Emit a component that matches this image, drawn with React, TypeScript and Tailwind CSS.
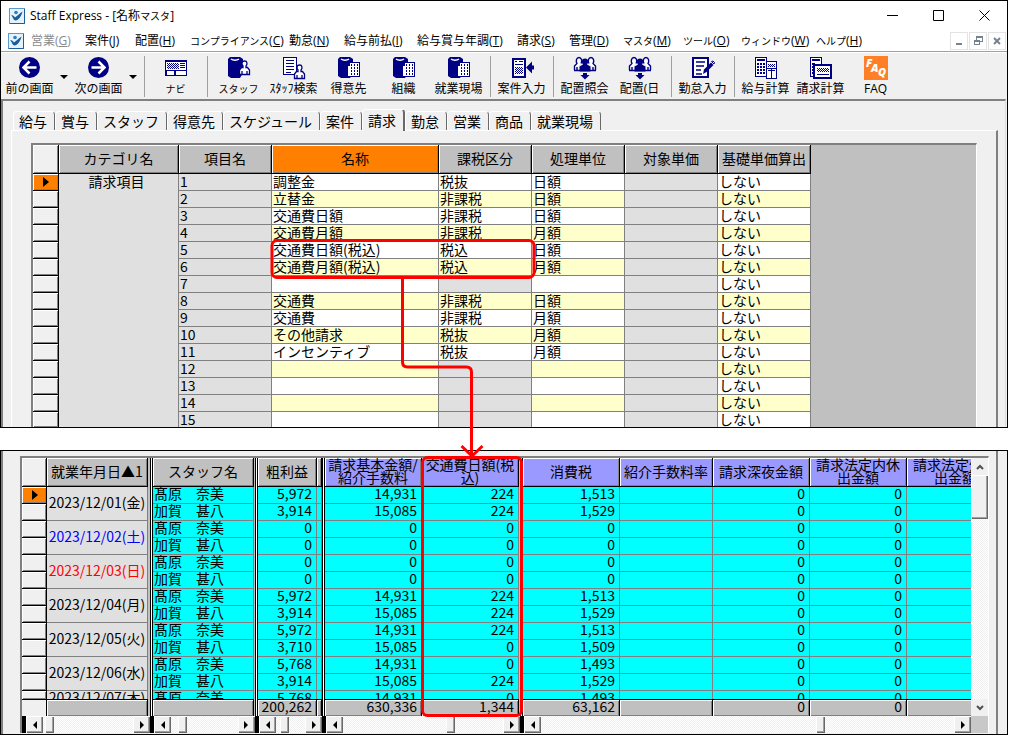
import { Fragment, useState } from "react";
import type { ReactNode } from "react";
import clsx from "clsx";

const NAVY = "#000084";

const menus = [
  { text: "営業", mnemonic: "G", width: "w-[54px]", disabled: true },
  { text: "案件", mnemonic: "J", width: "w-[50px]" },
  { text: "配置", mnemonic: "H", width: "w-[55px]" },
  { text: "コンプライアンス", mnemonic: "C", width: "w-[99px]", kana: true },
  { text: "勤怠", mnemonic: "N", width: "w-[55px]" },
  { text: "給与前払", mnemonic: "I", width: "w-[73px]" },
  { text: "給与賞与年調", mnemonic: "T", width: "w-[100px]" },
  { text: "請求", mnemonic: "S", width: "w-[52px]" },
  { text: "管理", mnemonic: "D", width: "w-[54px]" },
  { text: "マスタ", mnemonic: "M", width: "w-[60px]", kana: true },
  { text: "ツール", mnemonic: "O", width: "w-[58px]", kana: true },
  { text: "ウィンドウ", mnemonic: "W", width: "w-[75px]", kana: true },
  { text: "ヘルプ", mnemonic: "H", width: "w-[50px]", kana: true }
];

const tabs = ["給与", "賞与", "スタッフ", "得意先", "スケジュール", "案件", "請求", "勤怠", "営業", "商品", "就業現場"];

const masterRows = [
  { name: "調整金", tax: "税抜", unit: "日額" },
  { name: "立替金", tax: "非課税", unit: "日額" },
  { name: "交通費日額", tax: "非課税", unit: "日額" },
  { name: "交通費月額", tax: "非課税", unit: "月額" },
  { name: "交通費日額(税込)", tax: "税込", unit: "日額" },
  { name: "交通費月額(税込)", tax: "税込", unit: "月額" },
  { name: "", tax: "", unit: "" },
  { name: "交通費", tax: "非課税", unit: "日額" },
  { name: "交通費", tax: "非課税", unit: "月額" },
  { name: "その他請求", tax: "税抜", unit: "月額" },
  { name: "インセンティブ", tax: "税抜", unit: "月額" },
  { name: "", tax: "", unit: "" },
  { name: "", tax: "", unit: "" },
  { name: "", tax: "", unit: "" },
  { name: "", tax: "", unit: "" }
];

const days = [
  { label: "2023/12/01(金)", color: "text-black" },
  { label: "2023/12/02(土)", color: "text-[#0000ff]" },
  { label: "2023/12/03(日)", color: "text-[#ff0000]" },
  { label: "2023/12/04(月)", color: "text-black" },
  { label: "2023/12/05(火)", color: "text-black" },
  { label: "2023/12/06(水)", color: "text-black" },
  { label: "2023/12/07(木)", color: "text-black" }
];

// staff, gross profit, base amount, transport, tax
const results = [
  ["髙原　奈美", "5,972", "14,931", "224", "1,513"],
  ["加賀　甚八", "3,914", "15,085", "224", "1,529"],
  ["髙原　奈美", "0", "0", "0", "0"],
  ["加賀　甚八", "0", "0", "0", "0"],
  ["髙原　奈美", "0", "0", "0", "0"],
  ["加賀　甚八", "0", "0", "0", "0"],
  ["髙原　奈美", "5,972", "14,931", "224", "1,513"],
  ["加賀　甚八", "3,914", "15,085", "224", "1,529"],
  ["髙原　奈美", "5,972", "14,931", "224", "1,513"],
  ["加賀　甚八", "3,710", "15,085", "0", "1,509"],
  ["髙原　奈美", "5,768", "14,931", "0", "1,493"],
  ["加賀　甚八", "3,914", "15,085", "224", "1,529"],
  ["髙原　奈美", "5,768", "14,931", "0", "1,493"]
];

const bevel = "shadow-[inset_1px_1px_#fff,inset_-1px_-1px_#808080]";
const raised = "bg-[#f0f0f0] shadow-[inset_1px_1px_#fff,inset_-1px_-1px_#696969,inset_-2px_-2px_#a0a0a0]";

function AppIcon() {
  return (
    <svg width="16" height="16" viewBox="0 0 16 16" className="shrink-0">
      <rect x="0.5" y="0.5" width="15" height="15" fill="#e6f2fa" stroke="#5b9bcb" />
      <path d="M15.5 1v14.5H1" fill="none" stroke="#1c5f9c" />
      <path d="M2 7c2 0 3 1 4 2.500C8 8 10 6 13.500 3.500C12.500 8 9.500 12.500 6.500 12.500C4.500 12.500 4 9 2 7z" fill="#175d9e" />
      <circle cx="7" cy="4.500" r="1.800" fill="#2f7cc0" />
    </svg>
  );
}

function Icon({ children }: { children: ReactNode }) {
  return (
    <svg width="24" height="24" viewBox="0 0 24 24" fill="none">
      {children}
    </svg>
  );
}

function ArrowIcon({ flip }: { flip?: boolean }) {
  return (
    <Icon>
      <circle cx="11.500" cy="11.500" r="10.500" fill={NAVY} />
      <path
        d={flip ? "M4.500 11.500h12M11.500 5.500l6 6l-6 6" : "M18.500 11.500H6.500M11.500 5.500l-6 6l6 6"}
        stroke="#fff"
        strokeWidth="2.500"
      />
    </Icon>
  );
}

function Person({ x, y }: { x: number; y: number }) {
  return (
    <g transform={`translate(${x} ${y})`} fill="#fff" stroke={NAVY} strokeWidth="1.300">
      <path d="M0.500 14.500v-4.500l2-2.500h1.500v-1.500C2.500 4.500 2.500 1 5.500 1S8.500 4.500 7 6v1.500h1.500l2 2.500v4.500z" />
      <path d="M3 14v-3M8 14v-3" />
    </g>
  );
}

function Book() {
  return (
    <g>
      <path d="M1 3l2-2h10l3 2v14l-3 5H4l-3-2z" fill={NAVY} />
      <path d="M4 3c2 1.500 6 1.500 8 0" stroke="#fff" strokeWidth="1.500" />
    </g>
  );
}

function StaffIcon() {
  return (
    <Icon>
      <Book />
      <Person x={12} y={4} />
    </Icon>
  );
}

function StaffSearchIcon() {
  return (
    <Icon>
      <g shapeRendering="crispEdges">
        <path d="M1.500 1.500h13v17h-13z" fill="#fff" stroke={NAVY} />
        <path d="M4 4.500h8M4 7.500h8M4 10.500h8M4 13.500h8M4 16.500h5" stroke={NAVY} />
      </g>
      <Person x={12} y={8} />
    </Icon>
  );
}

function BuildingIcon() {
  return (
    <Icon>
      <Book />
      <g shapeRendering="crispEdges">
        <path d="M12.500 6.500h10v14h-12v-11h2z" fill="#fff" stroke={NAVY} />
        <path d="M14 9h7M14 12h7M14 15h7M14 18h7" stroke={NAVY} strokeDasharray="1 2" strokeWidth="2" />
      </g>
    </Icon>
  );
}

function Hatch({ x, y, w, h }: { x: number; y: number; w: number; h: number }) {
  const rows = Array.from({ length: h }, (_, i) => i);
  return (
    <g shapeRendering="crispEdges" stroke={NAVY} strokeDasharray="1 1">
      {rows.map((i) => (
        <path key={i} d={`M${x + (i % 2)} ${y + i + 0.5}h${w - (i % 2)}`} />
      ))}
    </g>
  );
}

function NaviIcon() {
  return (
    <Icon>
      <g shapeRendering="crispEdges">
        <path d="M1 4h22v16H1z" fill={NAVY} />
        <path d="M2 6h20v8H2zM3 15h7v4H3zM12 15h10v4H12z" fill="#fff" />
        <path d="M16 7.500h5M16 9.500h5M16 11.500h5" stroke={NAVY} />
      </g>
      <Hatch x={3} y={7} w={12} h={6} />
    </Icon>
  );
}

function JobEntryIcon() {
  return (
    <Icon>
      <g shapeRendering="crispEdges">
        <path d="M3 3h12v18H3z" fill="#fff" stroke={NAVY} strokeWidth="2" />
        <path d="M5 5.500h2M9 5.500h4M5 8.500h8" stroke={NAVY} />
      </g>
      <Hatch x={5} y={11} w={8} h={7} />
      <path d="M16 11.500l6-6v4h2v4h-2v4z" fill={NAVY} />
    </Icon>
  );
}

function PlacementIcon() {
  return (
    <Icon>
      <path
        d="M1.500 14v-4l2.500-2.500C2.500 5 3.500 1.500 6 1.500S9.500 5 8 7.500M22.500 14v-4L20 7.500C21.500 5 20.500 1.500 18 1.500S14.500 5 16 7.500"
        fill="#fff"
        stroke={NAVY}
        strokeWidth="1.400"
      />
      <path d="M1 14.500h22M4 11v3M20 11v3" stroke={NAVY} strokeWidth="1.400" />
      <path d="M6.500 15.500V10.500L10 8.500C8 6 8.500 2.500 12 2.500S16 6 14 8.500l3.500 2v5z" fill={NAVY} />
      <path d="M10 17h4v2h2.500l-4.500 4.500l-4.500-4.500H10z" fill={NAVY} />
    </Icon>
  );
}

function AttendanceIcon() {
  return (
    <Icon>
      <path d="M2 2h15v19H2z" fill="#fff" stroke={NAVY} strokeWidth="2" shapeRendering="crispEdges" />
      <path d="M5 6h9M5 10h8M5 14h5M5 18h6" stroke={NAVY} strokeWidth="1.500" />
      <path d="M12 18l1-4.500l7-7l2.500 2.500l-7 7z" fill={NAVY} />
      <path d="M20.500 5.500l1.500-.5l1.500 1.500l-.5 1.500z" stroke={NAVY} />
    </Icon>
  );
}

function PayrollIcon() {
  return (
    <Icon>
      <g shapeRendering="crispEdges">
        <path d="M1.500 1.500h11v19h-11z" fill="#fff" stroke={NAVY} />
        <path d="M3 4h8" stroke={NAVY} strokeWidth="2" />
        <path d="M3 8h8M3 11h8M3 14h8M3 17h8" stroke={NAVY} strokeWidth="2" strokeDasharray="2 1" />
        <path d="M12.500 5.500h10v17h-10z" fill="#fff" stroke={NAVY} />
        <path d="M12.500 12.500h10M14 14.500h7M17.500 13v9" stroke={NAVY} />
      </g>
      <Hatch x={14} y={8} w={7} h={3} />
    </Icon>
  );
}

function BillingIcon() {
  return (
    <Icon>
      <g shapeRendering="crispEdges">
        <path d="M1.500 1.500h11v19h-11z" fill="#fff" stroke={NAVY} />
        <path d="M3 4h8" stroke={NAVY} strokeWidth="2" />
        <path d="M3 8h3M3 11h3M3 14h3M3 17h3" stroke={NAVY} strokeWidth="2" />
        <path d="M5 9h17v13H5z" fill="#fff" stroke={NAVY} strokeWidth="2" />
        <path d="M8 18.500h12" stroke={NAVY} />
      </g>
      <Hatch x={8} y={12} w={12} h={4} />
    </Icon>
  );
}

function FaqIcon() {
  return (
    <svg width="24" height="24" viewBox="0 0 24 24" aria-hidden="true">
      <rect width="24" height="24" fill="#ff7f27" />
      <g fill="#fff" fontFamily="Open Sans, sans-serif" fontWeight="800" fontStyle="italic" fontSize="11">
        <text x="2" y="11">F</text>
        <text x="7" y="16">A</text>
        <text x="14" y="20">Q</text>
      </g>
    </svg>
  );
}

function ToolButton({ icon, label, kana }: { icon: ReactNode; label: string; kana?: boolean }) {
  return (
    <button className="w-[55px] shrink-0 flex flex-col items-center">
      {icon}
      <span className={clsx("pt-px leading-4 whitespace-nowrap", kana ? "text-[10px]" : "text-xs")}>{label}</span>
    </button>
  );
}

function HistoryArrow({ label }: { label: string }) {
  return (
    <button aria-label={label} className="w-[14px] shrink-0 flex items-center justify-center">
      <svg width="8" height="4" viewBox="0 0 8 4">
        <path d="M0 0h8L4 4z" />
      </svg>
    </button>
  );
}

function Separator() {
  return (
    <div className="w-2 shrink-0 flex justify-center">
      <div className="w-px bg-[#a0a0a0]" />
    </div>
  );
}

function TitleBar() {
  return (
    <header className="h-[29px] flex items-center bg-white pl-2">
      <AppIcon />
      <h1 className="ml-[5px] text-xs">
        Staff Express - [名称<span className="text-[10px]">マスタ</span>]
      </h1>
      <div className="ml-auto flex self-stretch">
        <button aria-label="最小化" className="w-[46px] flex items-center justify-center">
          <svg width="11" height="11" stroke="#000"><path d="M0 5.500h11" /></svg>
        </button>
        <button aria-label="最大化" className="w-[46px] flex items-center justify-center">
          <svg width="11" height="11" stroke="#000" fill="none"><path d="M.5 .5h10v10h-10z" /></svg>
        </button>
        <button aria-label="閉じる" className="w-[46px] flex items-center justify-center">
          <svg width="11" height="11" stroke="#000"><path d="M.5 .5l10 10M10.500 .5l-10 10" /></svg>
        </button>
      </div>
    </header>
  );
}

function MenuBar() {
  const mdi = "w-[18px] h-[18px] border border-[#e3e3e3] flex items-center justify-center";
  return (
    <nav className="h-[22px] flex items-center bg-white border-b border-[#a0a0a0] pl-[7px]">
      <AppIcon />
      <div className="ml-[7px] flex">
        {menus.map((m) => (
          <button
            key={m.text}
            disabled={m.disabled}
            className={clsx("text-xs text-left whitespace-nowrap", m.width, m.disabled && "text-[#8a8a8a]")}
          >
            <span className={m.kana ? "text-[10px]" : "text-xs"}>{m.text}</span>(<u>{m.mnemonic}</u>)
          </button>
        ))}
      </div>
      <div className="ml-auto flex gap-px pr-px">
        <button aria-label="子ウィンドウ最小化" className={mdi}>
          <svg width="8" height="8"><path d="M1 7h6" stroke="#76838f" strokeWidth="2" /></svg>
        </button>
        <button aria-label="元に戻す" className={mdi}>
          <svg width="9" height="9" fill="none" stroke="#76838f" shapeRendering="crispEdges">
            <path d="M.5 4.500h5v4h-5zM.5 5.500h5M2.500 4V.5h6v5H6M2.500 1.500h6" />
          </svg>
        </button>
        <button aria-label="子ウィンドウを閉じる" className={mdi}>
          <svg width="8" height="8"><path d="M1 1l6 6M7 1l-6 6" stroke="#76838f" strokeWidth="2" /></svg>
        </button>
      </div>
    </nav>
  );
}

function Toolbar() {
  return (
    <div className="flex border-t border-white bg-[#f0f0f0] pt-[3px] pb-[2px] pl-px">
      <ToolButton icon={<ArrowIcon />} label="前の画面" />
      <HistoryArrow label="前の画面の履歴" />
      <ToolButton icon={<ArrowIcon flip />} label="次の画面" />
      <HistoryArrow label="次の画面の履歴" />
      <Separator />
      <ToolButton icon={<NaviIcon />} label="ナビ" kana />
      <Separator />
      <ToolButton icon={<StaffIcon />} label="スタッフ" kana />
      <ToolButton icon={<StaffSearchIcon />} label="ｽﾀｯﾌ検索" />
      <ToolButton icon={<BuildingIcon />} label="得意先" />
      <ToolButton icon={<BuildingIcon />} label="組織" />
      <ToolButton icon={<BuildingIcon />} label="就業現場" />
      <Separator />
      <ToolButton icon={<JobEntryIcon />} label="案件入力" />
      <Separator />
      <ToolButton icon={<PlacementIcon />} label="配置照会" />
      <ToolButton icon={<PlacementIcon />} label="配置(日" />
      <Separator />
      <ToolButton icon={<AttendanceIcon />} label="勤怠入力" />
      <Separator />
      <ToolButton icon={<PayrollIcon />} label="給与計算" />
      <ToolButton icon={<BillingIcon />} label="請求計算" />
      <ToolButton icon={<FaqIcon />} label="FAQ" />
    </div>
  );
}

function CurrentRowArrow() {
  return (
    <svg width="6" height="10" viewBox="0 0 6 10">
      <path d="M0 0l6 5l-6 5z" />
    </svg>
  );
}

function MasterTable() {
  const th = "h-[29px] p-0 pb-[3px] font-normal border-r border-b border-black whitespace-nowrap";
  const headers = ["カテゴリ名", "項目名", "名称", "課税区分", "処理単位", "対象単価", "基礎単価算出"];
  return (
    <table className="table-fixed w-[778px] border-separate border-spacing-0 text-sm leading-[14px]">
      <colgroup>
        <col className="w-[26px]" />
        <col className="w-[120px]" />
        <col className="w-[93px]" />
        <col className="w-[167px]" />
        <col className="w-[93px]" />
        <col className="w-[93px]" />
        <col className="w-[93px]" />
        <col className="w-[93px]" />
      </colgroup>
      <thead>
        <tr>
          <th aria-label="行" className={clsx(th, bevel, "bg-[#f0f0f0]")} />
          {headers.map((h) => (
            <th key={h} className={clsx(th, bevel, h === "名称" ? "bg-[#ff8000]" : "bg-[#c0c0c0]")}>
              {h}
            </th>
          ))}
        </tr>
      </thead>
      <tbody>
        {masterRows.map((row, i) => {
          const last = i === masterRows.length - 1;
          const height = last ? "h-[15px]" : "h-[17px] border-b";
          const cell = clsx("p-0 pl-px align-top border-r border-[#808080] whitespace-nowrap", height);
          const stripe = i % 2 ? "bg-[#ffffcc]" : "bg-white";
          return (
            <tr key={i}>
              <td
                className={clsx(
                  "p-0 pl-[10px] border-r border-black",
                  bevel,
                  height,
                  i === 0 ? "bg-[#ff8000]" : "bg-[#f0f0f0]"
                )}
              >
                {i === 0 && <CurrentRowArrow />}
              </td>
              {i === 0 && (
                <td
                  rowSpan={masterRows.length}
                  className="p-0 pr-1 align-top text-center bg-[#e0e0e0] border-r border-[#808080]"
                >
                  請求項目
                </td>
              )}
              <td className={clsx(cell, "bg-[#e0e0e0]")}>{i + 1}</td>
              <td className={clsx(cell, stripe)}>{row.name}</td>
              <td className={clsx(cell, row.tax ? stripe : "bg-[#e0e0e0]")}>{row.tax}</td>
              <td className={clsx(cell, stripe)}>{row.unit}</td>
              <td className={clsx(cell, "bg-[#e0e0e0]")} />
              <td className={clsx(cell, stripe)}>しない</td>
            </tr>
          );
        })}
      </tbody>
    </table>
  );
}

function MasterWindow() {
  const [active, setActive] = useState("請求");
  return (
    <section className="mr-4 border border-black bg-[#f0f0f0] overflow-hidden">
      <TitleBar />
      <MenuBar />
      <Toolbar />
      <div className="mr-px border-l-2 border-t-2 border-l-[#808080] border-t-[#808080] border-r border-r-[#dcdcdc] font-['Noto_Sans_CJK_JP',sans-serif]">
        <div role="tablist" className="flex items-end pt-2 pl-[10px] text-sm leading-4">
          {tabs.map((t) => (
            <button
              key={t}
              role="tab"
              aria-selected={active === t}
              onClick={() => setActive(t)}
              className={clsx(
                "pl-[5px] pr-[7px] pb-px whitespace-nowrap rounded-t-sm border-l border-t border-l-white border-t-white bg-[#f0f0f0]",
                active === t
                  ? "h-[22px] -mb-px relative z-10 border-r-2 border-r-[#696969]"
                  : "h-[19px] border-r border-r-[#696969]"
              )}
            >
              {t}
            </button>
          ))}
        </div>
        <div className="ml-2 mr-[7px] pt-3 pl-[19px] pr-[19px] border-l border-t border-l-white border-t-white border-r-2 border-r-[#808080]">
          <div className="overflow-hidden bg-[#c0c0c0] border-l-2 border-t-2 border-l-[#808080] border-t-[#808080] border-r border-r-white">
            <MasterTable />
          </div>
        </div>
      </div>
    </section>
  );
}

type Column = {
  title: string;
  width: string;
  total?: string;
  values: string[];
  align?: "left";
  fill?: string;
};

const dotted =
  "bg-[#fafafa] bg-[repeating-conic-gradient(#f0f0f0_0_25%,#ffffff_0_50%)] bg-[length:2px_2px]";

function HorizontalScroll({ position, first }: { position: number; first?: boolean }) {
  return (
    <div className={clsx("h-[17px] flex border-black", first ? "border-l-4" : "border-l", dotted)}>
      <button aria-label="左へ" className={clsx("w-[17px] shrink-0 flex items-center justify-center", raised)}>
        <svg width="4" height="8"><path d="M4 0v8L0 4z" /></svg>
      </button>
      <div style={{ flexGrow: position }} />
      <div className={clsx("w-[9px] shrink-0", raised)} />
      <div style={{ flexGrow: 1 - position }} />
      <button aria-label="右へ" className={clsx("w-[17px] shrink-0 flex items-center justify-center", raised)}>
        <svg width="4" height="8"><path d="M0 0v8l4-4z" /></svg>
      </button>
    </div>
  );
}

function Pane({
  width,
  columns,
  tableWidth,
  scroll,
  dates
}: {
  width: string;
  columns: Column[];
  tableWidth: string;
  scroll: number;
  dates?: boolean;
}) {
  const th = "h-[29px] p-0 pb-[2px] font-normal leading-[13px] whitespace-pre border-r border-b border-black";
  return (
    <div className={clsx("flex flex-col", width)}>
      <div className="overflow-hidden bg-[#c0c0c0]">
        <table className={clsx("table-fixed border-separate border-spacing-0 text-sm leading-[13px]", tableWidth)}>
          <colgroup>
            {dates && <col className="w-[25px]" />}
            {columns.map((c) => (
              <col key={c.title} className={c.width} />
            ))}
          </colgroup>
          <thead>
            <tr>
              {dates && <th aria-label="行" className={clsx(th, bevel, "bg-[#f0f0f0]")} />}
              {columns.map((c) => (
                <th key={c.title} className={clsx(th, bevel, c.fill || "bg-[#c0c0c0]")}>
                  {c.title}
                </th>
              ))}
            </tr>
          </thead>
          <tbody>
            {results.map((_, i) => {
              const last = i === results.length - 1;
              const height = last ? "h-2" : "h-4";
              const day = days[Math.floor(i / 2)];
              return (
                <tr key={i}>
                  {dates && (
                    <td
                      className={clsx(
                        "p-0 pl-[10px] border-r border-black",
                        bevel,
                        !last && "border-b",
                        i === 0 ? "bg-[#ff8000]" : "bg-[#f0f0f0]"
                      )}
                    >
                      <div className={clsx("flex items-center", height)}>{i === 0 && <CurrentRowArrow />}</div>
                    </td>
                  )}
                  {dates && i % 2 === 0 && (
                    <td
                      rowSpan={last ? 1 : 2}
                      className={clsx(
                        "p-0 bg-[#e0e0e0] border-r border-[#808080] whitespace-nowrap",
                        day.color,
                        !last && "border-b"
                      )}
                    >
                      <div className={clsx("overflow-hidden text-center", height)}>{day.label}</div>
                    </td>
                  )}
                  {!dates &&
                    columns.map((c) => (
                      <td
                        key={c.title}
                        className={clsx("p-0 bg-[#00ffff] border-r border-[#808080]", !last && "border-b")}
                      >
                        <div
                          className={clsx(
                            "overflow-hidden whitespace-nowrap",
                            height,
                            c.align === "left" ? "pl-px" : "pr-1 text-right"
                          )}
                        >
                          {c.values[i]}
                        </div>
                      </td>
                    ))}
                </tr>
              );
            })}
          </tbody>
          <tfoot>
            <tr>
              {dates && <td className="h-[17px] p-0 bg-[#f0f0f0] border-t border-r border-black" />}
              {columns.map((c) => (
                <td
                  key={c.title}
                  className={clsx(
                    "h-[17px] p-0 pr-1 align-top text-right bg-[#c0c0c0] border-t border-r border-black",
                    bevel
                  )}
                >
                  {c.total}
                </td>
              ))}
            </tr>
          </tfoot>
        </table>
      </div>
      <HorizontalScroll position={scroll} first={dates} />
    </div>
  );
}

function Splitter() {
  return (
    <div className="w-[3px] shrink-0 flex flex-col">
      <div className="grow border-x border-black bg-white" />
      <div className="h-[17px] bg-black" />
    </div>
  );
}

function ResultWindow() {
  const pick = (n: number) => results.map((r) => r[n]);
  const zeros = results.map(() => "0");
  const blank = results.map(() => "");
  const lilac = "bg-[#9999ff]";
  const panes = [
    {
      width: "w-[128px] shrink-0",
      tableWidth: "w-[126px]",
      scroll: 0.02,
      dates: true,
      columns: [{ title: "就業年月日▲1", width: "w-[101px]", values: [] }]
    },
    {
      width: "w-[102px] shrink-0",
      tableWidth: "w-[101px]",
      scroll: 0.12,
      columns: [{ title: "スタッフ名", width: "w-[101px]", values: pick(0), align: "left" as const }]
    },
    {
      width: "w-[64px] shrink-0",
      tableWidth: "w-[64px]",
      scroll: 0.2,
      columns: [
        { title: "粗利益", width: "w-[59px]", values: pick(1), total: "200,262" },
        { title: "", width: "w-[5px]", values: blank }
      ]
    },
    {
      width: "w-[195px] shrink-0",
      tableWidth: "w-[194px]",
      scroll: 0.68,
      columns: [
        { title: "請求基本金額/\n紹介手数料", width: "w-[97px]", values: pick(2), total: "630,336", fill: lilac },
        { title: "交通費日額(税\n込)", width: "w-[97px]", values: pick(3), total: "1,344", fill: lilac }
      ]
    },
    {
      width: "flex-1 min-w-0",
      tableWidth: "w-[481px]",
      scroll: 0.68,
      columns: [
        { title: "消費税", width: "w-[97px]", values: pick(4), total: "63,162", fill: lilac },
        { title: "紹介手数料率", width: "w-[93px]", values: blank, fill: lilac },
        { title: "請求深夜金額", width: "w-[97px]", values: zeros, total: "0", fill: lilac },
        { title: "請求法定内休\n出金額", width: "w-[97px]", values: zeros, total: "0", fill: lilac },
        { title: "請求法定外休\n出金額", width: "w-[97px]", values: zeros, total: "0", fill: lilac }
      ]
    }
  ];

  return (
    <section className="mr-4 border border-black bg-[#f0f0f0] overflow-hidden font-['Noto_Sans_CJK_JP',sans-serif]">
      <div className="mr-[9px] pt-[5px] pb-px pl-[17px] pr-[7px] border-l-2 border-l-[#808080] border-r-2 border-r-[#808080]">
        <div className="flex border-l-2 border-t-2 border-l-[#808080] border-t-[#808080] border-r border-r-white">
          {panes.map((p, i) => (
            <Fragment key={i}>
              {i > 0 && <Splitter />}
              <Pane {...p} />
            </Fragment>
          ))}
          <div className={clsx("w-[17px] shrink-0 flex flex-col", dotted)}>
            <button aria-label="上へ" className="h-[17px] bg-[#f0f0f0] flex items-center justify-center">
              <svg width="8" height="6" fill="none" stroke="#505050" strokeWidth="2"><path d="M1 5l3-3l3 3" /></svg>
            </button>
            <div className={clsx("h-11", raised)} />
            <button aria-label="下へ" className="mt-auto h-[17px] bg-[#f0f0f0] flex items-center justify-center">
              <svg width="8" height="6" fill="none" stroke="#505050" strokeWidth="2"><path d="M1 1l3 3l3-3" /></svg>
            </button>
            <div className="h-[17px] bg-[#c8c8c8]" />
          </div>
        </div>
      </div>
    </section>
  );
}

// red frames and the arrow that links the two windows
function Callout() {
  return (
    <svg
      width="1008"
      height="735"
      fill="none"
      stroke="#ff0000"
      strokeWidth="3"
      className="absolute left-0 top-0 z-20 pointer-events-none"
    >
      <rect x="272" y="240.500" width="262" height="37" rx="5" />
      <path d="M402.500 278v84q0 5 5 5h59q5 0 5 5v83" />
      <path d="M461.500 446l10.500 10l10.500-10" />
      <rect x="422.500" y="457.500" width="99" height="258" rx="5" />
    </svg>
  );
}

export default function App() {
  return (
    <main className="relative flex flex-col gap-[22px] bg-white text-black font-['Open_Sans','Noto_Sans_CJK_JP',sans-serif]">
      <MasterWindow />
      <ResultWindow />
      <Callout />
    </main>
  );
}
